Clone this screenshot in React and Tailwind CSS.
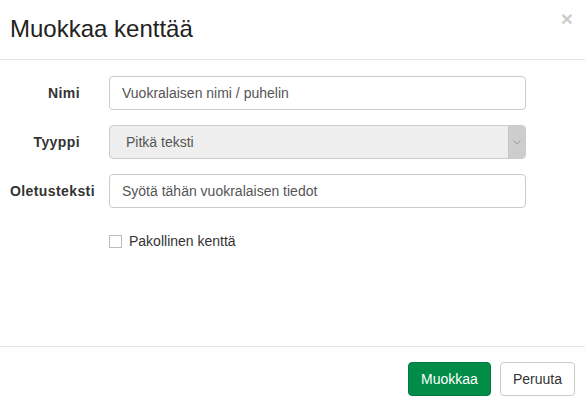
export default function App() {
  return (
    <div className="w-[585px] h-[403px] bg-white text-[14px] text-[#333] flex flex-col" style={{ fontFamily: '"Liberation Sans", Arial, sans-serif' }}>
      <div className="h-[60px] border-b border-[#e5e5e5] flex items-start justify-between pl-[10px] pr-[12px] shrink-0">
        <h4 className="text-[24px] leading-none mt-[17px] text-[#222]">Muokkaa kenttää</h4>
        <span className="text-[21px] font-bold leading-none text-black opacity-20 mt-[8px]">×</span>
      </div>
      <div className="flex-1 flex flex-col pl-[10px] pt-[16px]">
        <div className="flex items-center h-[34px]">
          <label className="w-[70px] text-right font-bold whitespace-nowrap tracking-[0.4px]">Nimi</label>
          <div className="ml-[29px] w-[417px] h-[34px] border border-[#ccc] rounded-[4px] flex items-center px-[12px] text-[#555]">Vuokralaisen nimi / puhelin</div>
        </div>
        <div className="flex items-center h-[34px] mt-[15px]">
          <label className="w-[70px] text-right font-bold whitespace-nowrap tracking-[0.4px]">Tyyppi</label>
          <div className="ml-[29px] w-[417px] h-[34px] border border-[#ccc] rounded-[4px] flex items-center bg-[#eee] text-[#555] overflow-hidden">
            <span className="flex-1 pl-[16px]">Pitkä teksti</span>
            <div className="w-[17px] h-full bg-[#cdcdcd] border-l border-[#c4c4c4] flex items-center justify-center">
              <svg width="8" height="5" viewBox="0 0 8 5"><path d="M0.5 0.5 L4 4 L7.5 0.5" fill="none" stroke="#999" strokeWidth="1" /></svg>
            </div>
          </div>
        </div>
        <div className="flex items-center h-[34px] mt-[15px]">
          <label className="w-[70px] text-right font-bold whitespace-nowrap tracking-[0.4px]">Oletusteksti</label>
          <div className="ml-[29px] w-[417px] h-[34px] border border-[#ccc] rounded-[4px] flex items-center px-[12px] text-[#555]">Syötä tähän vuokralaisen tiedot</div>
        </div>
        <div className="flex items-center ml-[99px] mt-[23px]">
          <span className="w-[13px] h-[13px] border border-[#bbb] bg-white"></span>
          <span className="ml-[7px]">Pakollinen kenttä</span>
        </div>
      </div>
      <div className="h-[57px] border-t border-[#e5e5e5] flex items-start justify-end pr-[10px] pt-[15px] gap-[9px] shrink-0">
        <button className="h-[34px] px-[12px] w-[83px] rounded-[4px] bg-[#018c47] border border-[#017a3d] text-white">Muokkaa</button>
        <button className="h-[34px] px-[12px] w-[75px] rounded-[4px] bg-white border border-[#ccc] text-[#333]">Peruuta</button>
      </div>
    </div>
  );
}
